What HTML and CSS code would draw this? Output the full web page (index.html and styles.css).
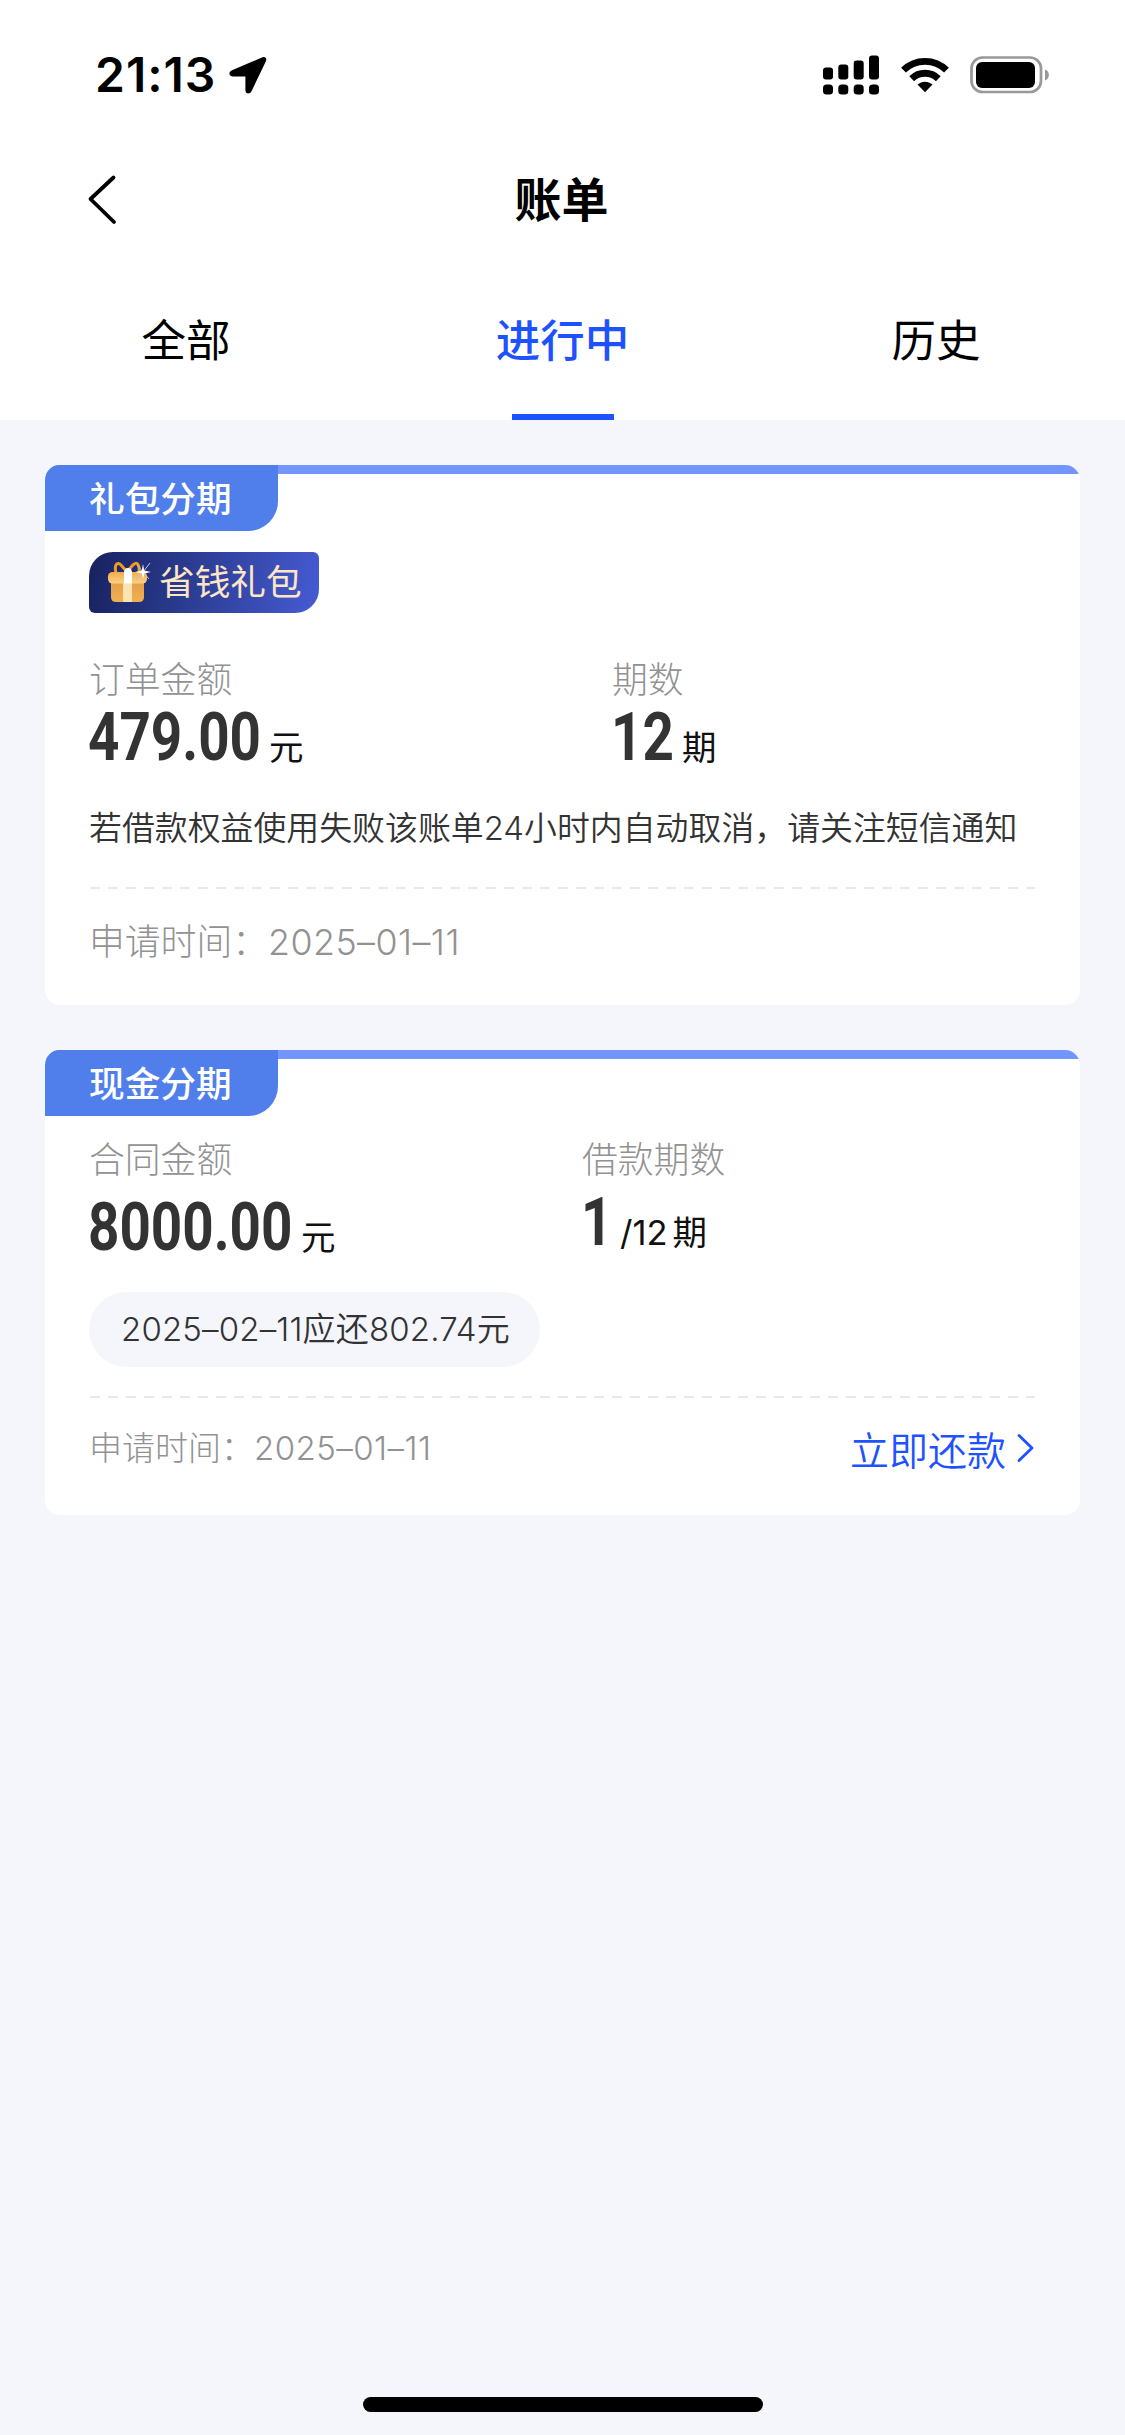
FILE: index.html
```html
<!DOCTYPE html>
<html lang="zh-CN">
<head>
<meta charset="utf-8">
<title>账单</title>
<link rel="stylesheet" href="styles.css">
</head>
<body>
<div class="screen">
  <header class="header">
    <div class="status">
      <div class="status-left">
        <span class="clock">21:13</span>
        <svg class="location" width="38" height="38" viewBox="0 0 38 38"><path d="M33.5 1.300 3 14.200C-1 16-.2 20.600 4 20.600H16.400V34C16.400 38.500 20.900 38.500 22.500 35.300L37 5C38.200 2 36 .3 33.500 1.300Z"/></svg>
      </div>
      <div class="status-right">
        <svg width="57" height="40" viewBox="0 0 57 40">
          <rect x="0" y="12.500" width="10" height="12" rx="3"/><rect x="15.300" y="9.500" width="10" height="15" rx="3"/><rect x="30.700" y="5.500" width="10" height="19" rx="3"/><rect x="46" y=".5" width="10" height="24" rx="3"/>
          <rect x="0" y="29.500" width="10" height="10" rx="3.500"/><rect x="15.300" y="29.500" width="10" height="10" rx="3.500"/><rect x="30.700" y="29.500" width="10" height="10" rx="3.500"/><rect x="46" y="29.500" width="10" height="10" rx="3.500"/>
        </svg>
        <svg class="wifi" width="48" height="36" viewBox="0 0 48 36">
          <g fill="none" stroke="#000" stroke-width="6.800"><path d="M2.500 13.200A30.500 30.500 0 0 1 45.500 13.200"/><path d="M10.700 21.700A19 19 0 0 1 37.300 21.700"/></g>
          <path d="M16.500 27.600C20.800 23.700 27.200 23.700 31.500 27.600L24 35.300Z"/>
        </svg>
        <svg class="battery" width="80" height="38" viewBox="0 0 80 38">
          <rect x="1.500" y="1.500" width="69.500" height="34.500" rx="11" fill="none" stroke="#999" stroke-width="2.700"/>
          <rect x="6" y="6" width="59" height="26" rx="6"/>
          <path d="M75 13.500C80.200 15 80.200 23 75 24.500Z" fill="#999"/>
        </svg>
      </div>
    </div>
    <div class="navbar">
      <svg class="back" width="32" height="52" viewBox="0 0 32 52"><path d="M27.500 4.500 4.500 26 28 49" fill="none" stroke="#000" stroke-width="3.800" stroke-linecap="round" stroke-linejoin="round"/></svg>
      <h1 class="title">账单</h1>
    </div>
    <nav class="tabs">
      <a class="tab">全部</a>
      <a class="tab active">进行中</a>
      <a class="tab">历史</a>
    </nav>
  </header>

  <main class="list">
    <section class="card card-gift">
      <div class="tag">礼包分期</div>
      <div class="body">
        <div class="badge">
          <svg width="46" height="46" viewBox="0 0 46 46">
            <defs>
              <linearGradient id="box" x1="0" y1="0" x2="0" y2="1"><stop offset="0" stop-color="#e5a04a"/><stop offset="1" stop-color="#f0b050"/></linearGradient>
              <linearGradient id="lid" x1="0" y1="0" x2="0" y2="1"><stop offset="0" stop-color="#f3ac4c"/><stop offset="1" stop-color="#fbd083"/></linearGradient>
            </defs>
            <path d="M9 13C7 5 10 1 14 5L20 12M32 13C33 3 29 1 25 6L20 12" fill="none" stroke="#ee9c1e" stroke-width="3" stroke-linejoin="round"/>
            <path d="M4 22H37V37Q37 42 32 42H9Q4 42 4 37Z" fill="url(#box)"/>
            <rect x="1" y="12" width="39" height="11.500" rx="4.500" fill="url(#lid)"/>
            <path d="M16 23H25V42H16Z" fill="#fbe4ae"/>
            <path d="M17 23.500V13Q17 8 21 8T25 13V23.500Z" fill="#fff"/>
            <path d="M36 12 43 3M36 12 29 20M36 12 30 5M36 12 42 19" stroke="#b9c5ef" stroke-width="1"/>
            <path d="M36 4 37.200 10.500 44 12 37.200 13.500 36 19 34.800 13.500 28 12 34.800 10.500Z" fill="#fff"/>
          </svg>
          <span>省钱礼包</span>
        </div>
        <div class="figures">
          <div class="figure">
            <div class="label">订单金额</div>
            <div class="value"><span class="num num-amount">479.00</span><span class="unit">元</span></div>
          </div>
          <div class="figure">
            <div class="label">期数</div>
            <div class="value"><span class="num num-term">12</span><span class="unit">期</span></div>
          </div>
        </div>
        <p class="notice">若借款权益使用失败该账单24小时内自动取消，请关注短信通知</p>
        <div class="rule"></div>
        <div class="foot"><span class="label">申请时间：<span class="date">2025–01–11</span></span></div>
      </div>
    </section>

    <section class="card card-cash">
      <div class="tag">现金分期</div>
      <div class="body">
        <div class="figures">
          <div class="figure">
            <div class="label">合同金额</div>
            <div class="value"><span class="num num-total">8000.00</span><span class="unit">元</span></div>
          </div>
          <div class="figure">
            <div class="label">借款期数</div>
            <div class="value value-term"><span class="num num-current">1</span><span class="unit total">/12</span><span class="unit">期</span></div>
          </div>
        </div>
        <div class="due">2025–02–11应还802.74元</div>
        <div class="rule"></div>
        <div class="foot">
          <span class="label small">申请时间：<span class="date">2025–01–11</span></span>
          <a class="pay">立即还款<svg width="19" height="30" viewBox="0 0 19 30"><path d="M3 2.500 16 15 3 27.500" fill="none" stroke="#1f52ff" stroke-width="2.900" stroke-linecap="round" stroke-linejoin="round"/></svg></a>
        </div>
      </div>
    </section>
  </main>
  <div class="home"></div>
</div>
</body>
</html>
```
FILE: styles.css
```css
* { box-sizing: border-box; }
body {
  margin: 0;
  background: #f5f6fc;
  color: #333;
  font-family: Inter, "Noto Sans CJK SC", sans-serif;
}
svg { display: block; flex: none; }
.screen { width: 1125px; height: 2435px; display: flex; flex-direction: column; }

.header { background: #fff; color: #000; height: 420px; }
.status { height: 150px; display: flex; justify-content: space-between; padding: 0 75px 0 95px; }
.status-left, .status-right { display: flex; align-items: center; }
.clock { font-size: 48px; font-weight: 600; letter-spacing: 1px; line-height: 60px; width: 134px; white-space: nowrap; }
.wifi { margin-left: 21px; }
.battery { margin-left: 21px; }

.navbar { height: 98px; display: grid; grid-template-columns: 120px 1fr 120px; align-items: center; }
.back { margin-left: 86px; }
.title { margin: 0; padding: 2px 2px 0 0; text-align: center; font-size: 47px; font-weight: 600; line-height: 60px; }

.tabs { height: 172px; display: grid; grid-template-columns: repeat(3, 1fr); }
.tab { display: flex; flex-direction: column; align-items: center; padding: 63px 3px 0 0; font-size: 44.5px; line-height: 60px; }
.tab.active { padding-right: 0; color: #1f52ff; font-weight: 500; }
.tab.active::after { content: ""; width: 102px; height: 6px; margin-top: auto; background: #1f52ff; }

.list { display: flex; flex-direction: column; gap: 45px; padding: 45px; }
.card { border-radius: 15px; background: linear-gradient(#7395ff 0 9px, #fff 9px); overflow: hidden; }
.card-gift { height: 540px; }
.card-cash { height: 465px; }
.tag {
  width: 233px; height: 66px; padding-left: 44px; border-radius: 0 0 30px 0;
  background: #507fec; color: #fff; font-size: 35.7px; font-weight: 500; line-height: 68px;
}
.body { padding: 0 45px 0 44px; }

.badge {
  display: flex; align-items: center; gap: 6px; width: 230px; height: 61px; margin-top: 21px; padding-left: 18px;
  border-radius: 24px 6px 24px 6px; background: linear-gradient(100deg, #18225f, #2c3d93 45%, #465bd3);
  color: #fde6c6; font-size: 35.7px; line-height: 63px;
}
.figures { display: grid; grid-template-columns: 523px 1fr; margin-top: 44px; }
.label { color: #929292; font-size: 35.8px; font-weight: 300; line-height: 46px; }
.value { display: flex; align-items: baseline; height: 68px; margin-top: 1px; line-height: 68px; }
.num { font-family: Roboto, sans-serif; font-size: 66px; font-weight: 700; transform: translateX(-1px) scaleX(.83); transform-origin: 0 50%; white-space: nowrap; }
.num-amount { width: 180px; }
.num-term { width: 70px; }
.num-total { width: 212px; }
.num-current { width: 38px; }
.unit { color: #111; font-size: 34.5px; }
.notice { margin: 31px 0 0; font-size: 32.9px; font-weight: 350; line-height: 50px; white-space: nowrap; }
.rule { height: 2px; margin: 34px 0 0 1px; background: repeating-linear-gradient(90deg, #e6e9f0 0 10px, transparent 10px 18px); }
.foot { display: flex; align-items: center; justify-content: space-between; height: 60px; margin-top: 23px; }
.date { letter-spacing: .45px; }

.card-cash .figures { grid-template-columns: 493px 1fr; margin-top: 21px; }
.card-cash .value { margin-top: 11px; }
.card-cash .value-term { margin-top: 6px; }
.total { margin-right: 5px; }
.due {
  width: 451px; height: 75px; margin-top: 30px; padding-left: 32px; border-radius: 38px;
  background: #f5f6fc; font-size: 33px; font-weight: 350; letter-spacing: .15px; line-height: 75px; white-space: nowrap;
}
.card-cash .rule { margin-top: 29px; }
.card-cash .foot { margin-top: 20px; }
.small { font-size: 33px; }
.pay { display: flex; align-items: center; gap: 10px; color: #1f52ff; font-size: 39px; font-weight: 350; }

.home { width: 400px; height: 15px; margin: auto auto 23px; border-radius: 8px; background: #000; }
```
